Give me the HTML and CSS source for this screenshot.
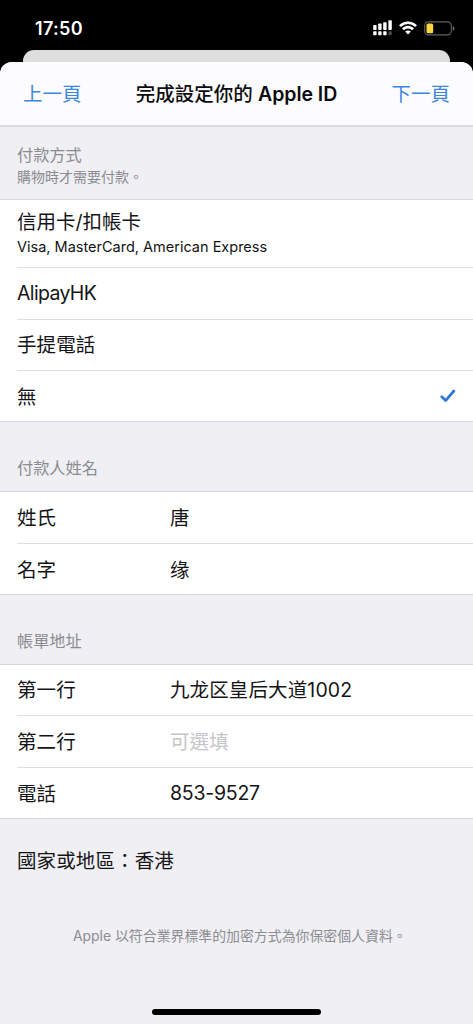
FILE: index.html
```html
<!DOCTYPE html>
<html lang="zh-Hant">
<head>
<meta charset="utf-8">
<title>完成設定你的 Apple ID</title>
<link rel="stylesheet" href="styles.css">
</head>
<body>
<div class="phone">
  <header class="status">
    <span class="time">17:50</span>
    <div class="status-icons">
      <svg class="signal" width="20" height="16" viewBox="0 0 20 16">
        <g fill="#fff">
          <rect x="0.2" y="5" width="3.4" height="5" rx="0.7"/>
          <rect x="5.2" y="3.6" width="3.4" height="6.4" rx="0.7"/>
          <rect x="10.2" y="2.2" width="3.4" height="7.8" rx="0.7"/>
          <rect x="15.4" y="0.2" width="3.4" height="9.8" rx="0.7"/>
          <rect x="0.2" y="11.2" width="3.4" height="4" rx="0.7"/>
          <rect x="5.2" y="11.2" width="3.4" height="4" rx="0.7"/>
          <rect x="10.2" y="11.2" width="3.4" height="4" rx="0.7"/>
          <rect x="15.4" y="11.2" width="3.4" height="4" rx="0.7" opacity="0.28"/>
        </g>
      </svg>
      <svg class="wifi" width="18" height="14" viewBox="0 0 18 14">
        <g fill="none" stroke="#fff" stroke-width="2.7">
          <path d="M1 5.1C5.5 .6 12.5 .6 17 5.1"/>
          <path d="M3.9 8.2C6.8 5.3 11.2 5.3 14.1 8.2"/>
        </g>
        <path fill="#fff" d="M6.1 10.5C7.8 9 10.2 9 11.9 10.5L9 13.5Z"/>
      </svg>
      <svg class="battery" width="31" height="15" viewBox="0 0 31 15">
        <rect x="0.7" y="0.9" width="26.6" height="13" rx="3.8" fill="none" stroke="#626262" stroke-width="1.1"/>
        <rect x="2.5" y="2.6" width="6.7" height="9.7" rx="1.6" fill="#f8d542"/>
        <path d="M28.8 5.1Q30.3 5.8 30.3 7.4T28.8 9.7Z" fill="#777"/>
      </svg>
    </div>
  </header>
  <div class="back-sheet"></div>
  <main class="sheet">
    <nav class="nav">
      <a class="nav-link">上一頁</a>
      <h1 class="title">完成設定你的 <span class="title-latin">Apple ID</span></h1>
      <a class="nav-link nav-next">下一頁</a>
    </nav>

    <div class="group-head group-head-first">
      <h2 class="group-title">付款方式</h2>
      <p class="group-note">購物時才需要付款。</p>
    </div>
    <section class="group">
      <div class="row row-card">
        <span>信用卡/扣帳卡</span>
        <span class="card-types">Visa, MasterCard, American Express</span>
      </div>
      <div class="row"><span class="alipay">AlipayHK</span></div>
      <div class="row">手提電話</div>
      <div class="row row-selected">
        <span>無</span>
        <svg class="check" width="16" height="14" viewBox="0 0 16 14"><path d="M1.8 7.8L5.6 11.6L13.8 2" fill="none" stroke="#3478d5" stroke-width="2.8" stroke-linecap="round" stroke-linejoin="round"/></svg>
      </div>
    </section>

    <div class="group-head"><h2 class="group-title">付款人姓名</h2></div>
    <section class="group">
      <div class="row field"><span>姓氏</span><span>唐</span></div>
      <div class="row field"><span>名字</span><span lang="zh-Hans">缘</span></div>
    </section>

    <div class="group-head"><h2 class="group-title">帳單地址</h2></div>
    <section class="group">
      <div class="row field"><span>第一行</span><span lang="zh-Hans">九龙区皇后大道1002</span></div>
      <div class="row field"><span>第二行</span><span class="placeholder">可選填</span></div>
      <div class="row field"><span>電話</span><span class="phone-number">853-9527</span></div>
    </section>

    <p class="region">國家或地區：香港</p>
    <p class="privacy">Apple 以符合業界標準的加密方式為你保密個人資料。</p>
    <div class="home-bar"></div>
  </main>
</div>
</body>
</html>
```
FILE: styles.css
```css
* { box-sizing: border-box; }
body {
  margin: 0;
  background: #000;
  font-family: Inter, "Noto Sans CJK TC", sans-serif;
  font-size: 19.5px;
  letter-spacing: 0.12px;
  color: #151517;
}
h1, h2, p { margin: 0; font-weight: 400; }
.phone {
  height: 1024px;
  display: flex;
  flex-direction: column;
  overflow: hidden;
}
.status {
  height: 50px;
  flex: none;
  display: flex;
  justify-content: space-between;
  padding: 17px 19px 0 35px;
}
.time {
  color: #fff;
  font-size: 18px;
  font-weight: 600;
  line-height: 24px;
  letter-spacing: 0.3px;
}
.status-icons { display: flex; align-items: flex-start; }
.signal { margin-top: 3px; }
.wifi { margin: 4px 7px 0 6px; }
.battery { margin-top: 4px; margin-right: -1px; }
.back-sheet {
  height: 12px;
  flex: none;
  margin: 0 23px;
  background: #dedede;
  border-radius: 11px 11px 0 0;
}
.sheet {
  flex: 1;
  display: flex;
  flex-direction: column;
  background: #efeff4;
  border-radius: 12px 12px 0 0;
  overflow: hidden;
}
.nav {
  height: 65px;
  flex: none;
  display: grid;
  grid-template-columns: 1fr auto 1fr;
  align-items: center;
  padding: 0 23px 2px;
  background: #fcfcfe;
  border-bottom: 2px solid #dddde1;
}
.nav-link { color: #3e87dc; letter-spacing: 0; }
.nav-next { text-align: right; }
.title {
  font-size: 19.5px;
  font-weight: 500;
  letter-spacing: 0;
  color: #0c0c0e;
}
.title-latin { font-weight: 600; letter-spacing: -0.05px; }
.group-head {
  height: 69px;
  flex: none;
  padding: 34px 17px 0;
  color: #8b8b90;
}
.group-head-first { height: 72px; padding-top: 16px; }
.group-title { font-size: 16.2px; line-height: 24px; letter-spacing: 0; }
.group-note { font-size: 14px; line-height: 20px; letter-spacing: 0; }
.group {
  flex: none;
  padding-left: 17px;
  background: #fff;
  border-top: 1px solid #d8d8dc;
  border-bottom: 1px solid #d8d8dc;
}
.row {
  height: 51.5px;
  display: flex;
  align-items: center;
  padding-bottom: 2px;
  border-bottom: 1px solid #dedee1;
}
.row:last-child { height: 50px; padding-bottom: 1px; border-bottom: 0; }
.row-card {
  height: 68px;
  flex-direction: column;
  align-items: flex-start;
  justify-content: center;
  padding-bottom: 0;
  letter-spacing: 0;
}
.row-card span { line-height: 25px; }
.row-card .card-types { font-size: 14.5px; line-height: 23px; }
.alipay { padding-top: 2px; letter-spacing: -0.65px; }
.row-selected { justify-content: space-between; padding-right: 17px; }
.field { display: grid; grid-template-columns: 153px 1fr; }
.phone-number { padding-top: 1px; letter-spacing: -0.25px; }
.placeholder { color: #c5c5c8; }
.region { padding: 27px 17px 0; line-height: 30px; }
.privacy {
  margin-top: 48px;
  padding-left: 73px;
  font-size: 13.9px;
  line-height: 24px;
  letter-spacing: 0;
  color: #8c8c91;
  white-space: nowrap;
}
.home-bar {
  width: 169px;
  height: 6px;
  margin: auto auto 9px;
  border-radius: 3px;
  background: #000;
}
```
